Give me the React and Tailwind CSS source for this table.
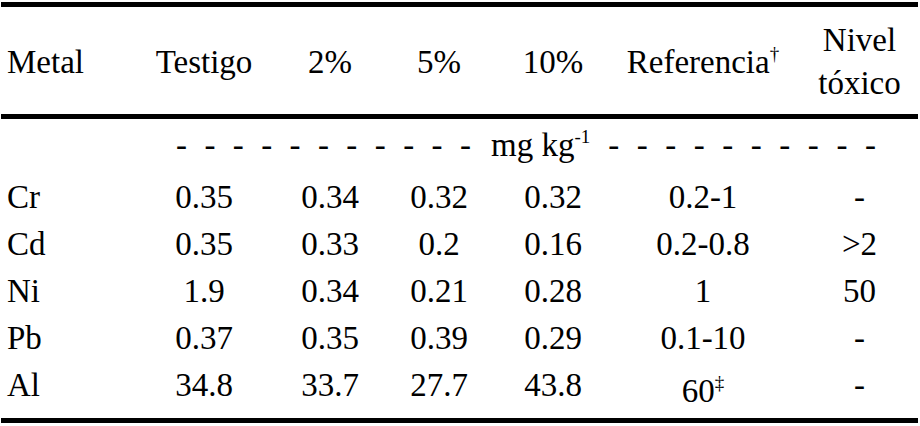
import React from "react";

const cols = "grid grid-cols-[140px_126px_126px_92px_136px_164px_1fr]";

const rows = [
  ["Cr", "0.35", "0.34", "0.32", "0.32", "0.2-1", "-"],
  ["Cd", "0.35", "0.33", "0.2", "0.16", "0.2-0.8", ">2"],
  ["Ni", "1.9", "0.34", "0.21", "0.28", "1", "50"],
  ["Pb", "0.37", "0.35", "0.39", "0.29", "0.1-10", "-"],
  ["Al", "34.8", "33.7", "27.7", "43.8", "60", "-"],
];

function Dashes({ count, className }) {
  return (
    <div className={`flex justify-between ${className}`}>
      {Array.from({ length: count }).map((_, i) => (
        <span key={i}>-</span>
      ))}
    </div>
  );
}

export default function App() {
  return (
    <div className="font-['Liberation_Serif'] w-[920px] h-[426px] bg-white text-black text-[33px] overflow-hidden">
      <div className="ml-[1px] w-[917px] mt-[2px] border-t-[5px] border-black">
        {/* Header */}
        <div className={`${cols} h-[112px] items-center pt-[3px] leading-[43px] border-b-[5px] border-black`}>
          <div className="pl-[6px]">Metal</div>
          <div className="text-center">Testigo</div>
          <div className="text-center">2%</div>
          <div className="text-center">5%</div>
          <div className="text-center">10%</div>
          <div className="text-center">
            Referencia<sup className="text-[19px] -top-[13px]">†</sup>
          </div>
          <div className="text-center pl-4">
            Nivel
            <br />
            tóxico
          </div>
        </div>

        {/* Body */}
        <div className="pt-[3px] pb-[3px] leading-[47px] border-b-[5px] border-black">
          <div className={cols}>
            <div className="col-start-2 col-span-6 flex items-baseline pl-[35px] pr-[42px]">
              <Dashes count={11} className="w-[295px]" />
              <span className="ml-[20px] whitespace-nowrap">
                mg kg<sup className="text-[19px] -top-[13px]">-1</sup>
              </span>
              <Dashes count={10} className="flex-1 ml-[18px]" />
            </div>
          </div>

          <div className="mt-[5px]">
            {rows.map((r) => (
              <div key={r[0]} className={cols}>
                <div className="pl-[6px]">{r[0]}</div>
                <div className="text-center">{r[1]}</div>
                <div className="text-center">{r[2]}</div>
                <div className="text-center">{r[3]}</div>
                <div className="text-center">{r[4]}</div>
                {r[0] === "Al" ? (
                  <div className="text-center pt-[6px]">
                    {r[5]}
                    <sup className="text-[19px] -top-[13px]">‡</sup>
                  </div>
                ) : (
                  <div className="text-center">{r[5]}</div>
                )}
                <div className="text-center pl-4">{r[6]}</div>
              </div>
            ))}
          </div>
        </div>
      </div>
    </div>
  );
}
